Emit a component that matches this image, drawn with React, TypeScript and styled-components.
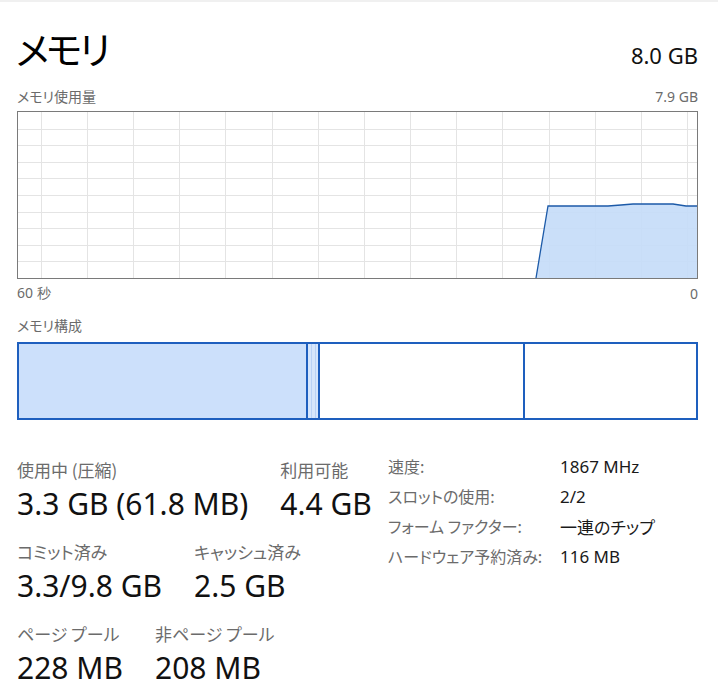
import React from "react";
import styled, { createGlobalStyle } from "styled-components";

const GlobalStyle = createGlobalStyle`
  html, body {
    margin: 0;
    padding: 0;
    background: #ffffff;
  }
  body {
    font-family: "Noto Sans", "Noto Sans CJK JP", sans-serif;
    font-feature-settings: "palt";
    color: #000;
  }
`;

const Page = styled.div`
  width: 718px;
  height: 699px;
  box-sizing: border-box;
  border-top: 2px solid #f0f0f0;
  padding: 0 20px 0 17px;
  overflow: hidden;
`;

const HeaderRow = styled.div`
  display: flex;
  justify-content: space-between;
  align-items: baseline;
  height: 68px;
  padding-top: 27px;
  box-sizing: border-box;
`;

const Title = styled.h1`
  margin: 0;
  font-family: "Noto Sans CJK JP", sans-serif;
  font-weight: 400;
  font-size: 38px;
  line-height: 38px;
  letter-spacing: -3px;
  margin-left: -1px;
`;

const Total = styled.div`
  font-size: 22px;
  line-height: 38px;
  color: #111;
`;

const CaptionRow = styled.div<{ $h: number }>`
  display: flex;
  justify-content: space-between;
  align-items: flex-end;
  height: ${(p) => p.$h}px;
  font-size: 14px;
  color: #6b6b6b;
  font-family: "Noto Sans CJK JP", sans-serif;
`;

const Small = styled.span`
  font-family: "Noto Sans", sans-serif;
  font-size: 14px;
`;

const ChartBox = styled.div`
  margin-top: 5px;
  height: 168px;
  border: 1px solid #7a7a7a;
  box-sizing: border-box;
  background: #fff;
`;

const Composition = styled.div`
  margin-top: 7px;
  height: 78px;
  display: flex;
  border: 2px solid #1e5fbe;
  box-sizing: border-box;
`;

const Segment = styled.div<{ $w: number; $kind: "used" | "modified" | "standby" | "free" }>`
  flex: ${(p) => (p.$w > 0 ? `0 0 ${p.$w}px` : "1 1 auto")};
  box-sizing: border-box;
  border-right: ${(p) => (p.$kind === "free" ? "none" : "2px solid #1e5fbe")};
  background: ${(p) =>
    p.$kind === "used"
      ? "#cce0fb"
      : p.$kind === "modified"
      ? "repeating-linear-gradient(90deg, #d6e6fb 0 3px, #b9d2f5 3px 4px)"
      : "#ffffff"};
`;

const Stats = styled.div`
  display: flex;
  margin-top: 39px;
`;

const LeftStats = styled.div`
  display: flex;
  flex-direction: column;
  width: 371px;
  gap: 14px;
`;

const StatRow = styled.div`
  display: flex;
  gap: 32px;
`;

const Stat = styled.div`
  display: flex;
  flex-direction: column;
`;

const StatLabel = styled.div`
  font-family: "Noto Sans CJK JP", sans-serif;
  font-size: 17px;
  line-height: 22px;
  color: #6b6b6b;
  white-space: nowrap;
`;

const StatValue = styled.div`
  font-size: 30px;
  line-height: 46px;
  color: #111;
  white-space: nowrap;
`;

const Specs = styled.div`
  display: grid;
  grid-template-columns: 172px auto;
  grid-auto-rows: 30px;
  align-items: center;
  margin-top: -8px;
`;

const SpecLabel = styled.div`
  font-family: "Noto Sans CJK JP", sans-serif;
  font-size: 16px;
  color: #6b6b6b;
  white-space: nowrap;
`;

const SpecValue = styled.div`
  font-family: "Noto Sans", "Noto Sans CJK JP", sans-serif;
  font-size: 17px;
  color: #1a1a1a;
  white-space: nowrap;
`;

function UsageChart() {
  const w = 679;
  const h = 166;
  const vLines: number[] = [];
  for (let x = 22.5; x < w; x += 46.2) vLines.push(Math.round(x) + 0.5);
  const hLines: number[] = [];
  for (let i = 1; i < 10; i++) hLines.push(Math.round((h / 10) * i) + 0.5);
  // points in chart-local coords (box starts at x=18,y=112 inside its 1px border)
  const pts: [number, number][] = [
    [518, h],
    [530, 94],
    [590, 94],
    [603, 93],
    [615, 92],
    [655, 92],
    [668, 94],
    [w, 94],
  ];
  const line = pts.map((p) => p.join(",")).join(" ");
  const area = `${line} ${w},${h}`;
  return (
    <svg width={w} height={h} style={{ display: "block" }}>
      {vLines.map((x) => (
        <line key={`v${x}`} x1={x} y1={0} x2={x} y2={h} stroke="#e4e4e4" strokeWidth={1} />
      ))}
      {hLines.map((y) => (
        <line key={`h${y}`} x1={0} y1={y} x2={w} y2={y} stroke="#e4e4e4" strokeWidth={1} />
      ))}
      <polygon points={area} fill="#c6dcf8" fillOpacity={0.92} />
      <polyline points={line} fill="none" stroke="#1c5aa8" strokeWidth={1.3} />
    </svg>
  );
}

const leftRows = [
  [
    { label: "使用中 (圧縮)", value: "3.3 GB (61.8 MB)" },
    { label: "利用可能", value: "4.4 GB" },
  ],
  [
    { label: "コミット済み", value: "3.3/9.8 GB" },
    { label: "キャッシュ済み", value: "2.5 GB" },
  ],
  [
    { label: "ページ プール", value: "228 MB" },
    { label: "非ページ プール", value: "208 MB" },
  ],
];

const specs = [
  { label: "速度:", value: "1867 MHz" },
  { label: "スロットの使用:", value: "2/2" },
  { label: "フォーム ファクター:", value: "一連のチップ" },
  { label: "ハードウェア予約済み:", value: "116 MB" },
];

export default function App() {
  return (
    <>
      <GlobalStyle />
      <Page>
        <HeaderRow>
          <Title>メモリ</Title>
          <Total>8.0 GB</Total>
        </HeaderRow>
        <CaptionRow $h={36}>
          <span>メモリ使用量</span>
          <Small>7.9 GB</Small>
        </CaptionRow>
        <ChartBox>
          <UsageChart />
        </ChartBox>
        <CaptionRow $h={24}>
          <Small>60 秒</Small>
          <Small>0</Small>
        </CaptionRow>
        <CaptionRow $h={32}>
          <span>メモリ構成</span>
        </CaptionRow>
        <Composition>
          <Segment $kind="used" $w={289} />
          <Segment $kind="modified" $w={12} />
          <Segment $kind="standby" $w={205} />
          <Segment $kind="free" $w={0} />
        </Composition>
        <Stats>
          <LeftStats>
            {leftRows.map((row, i) => (
              <StatRow key={i}>
                {row.map((s) => (
                  <Stat key={s.label}>
                    <StatLabel>{s.label}</StatLabel>
                    <StatValue>{s.value}</StatValue>
                  </Stat>
                ))}
              </StatRow>
            ))}
          </LeftStats>
          <Specs>
            {specs.map((s) => (
              <React.Fragment key={s.label}>
                <SpecLabel>{s.label}</SpecLabel>
                <SpecValue>{s.value}</SpecValue>
              </React.Fragment>
            ))}
          </Specs>
        </Stats>
      </Page>
    </>
  );
}
